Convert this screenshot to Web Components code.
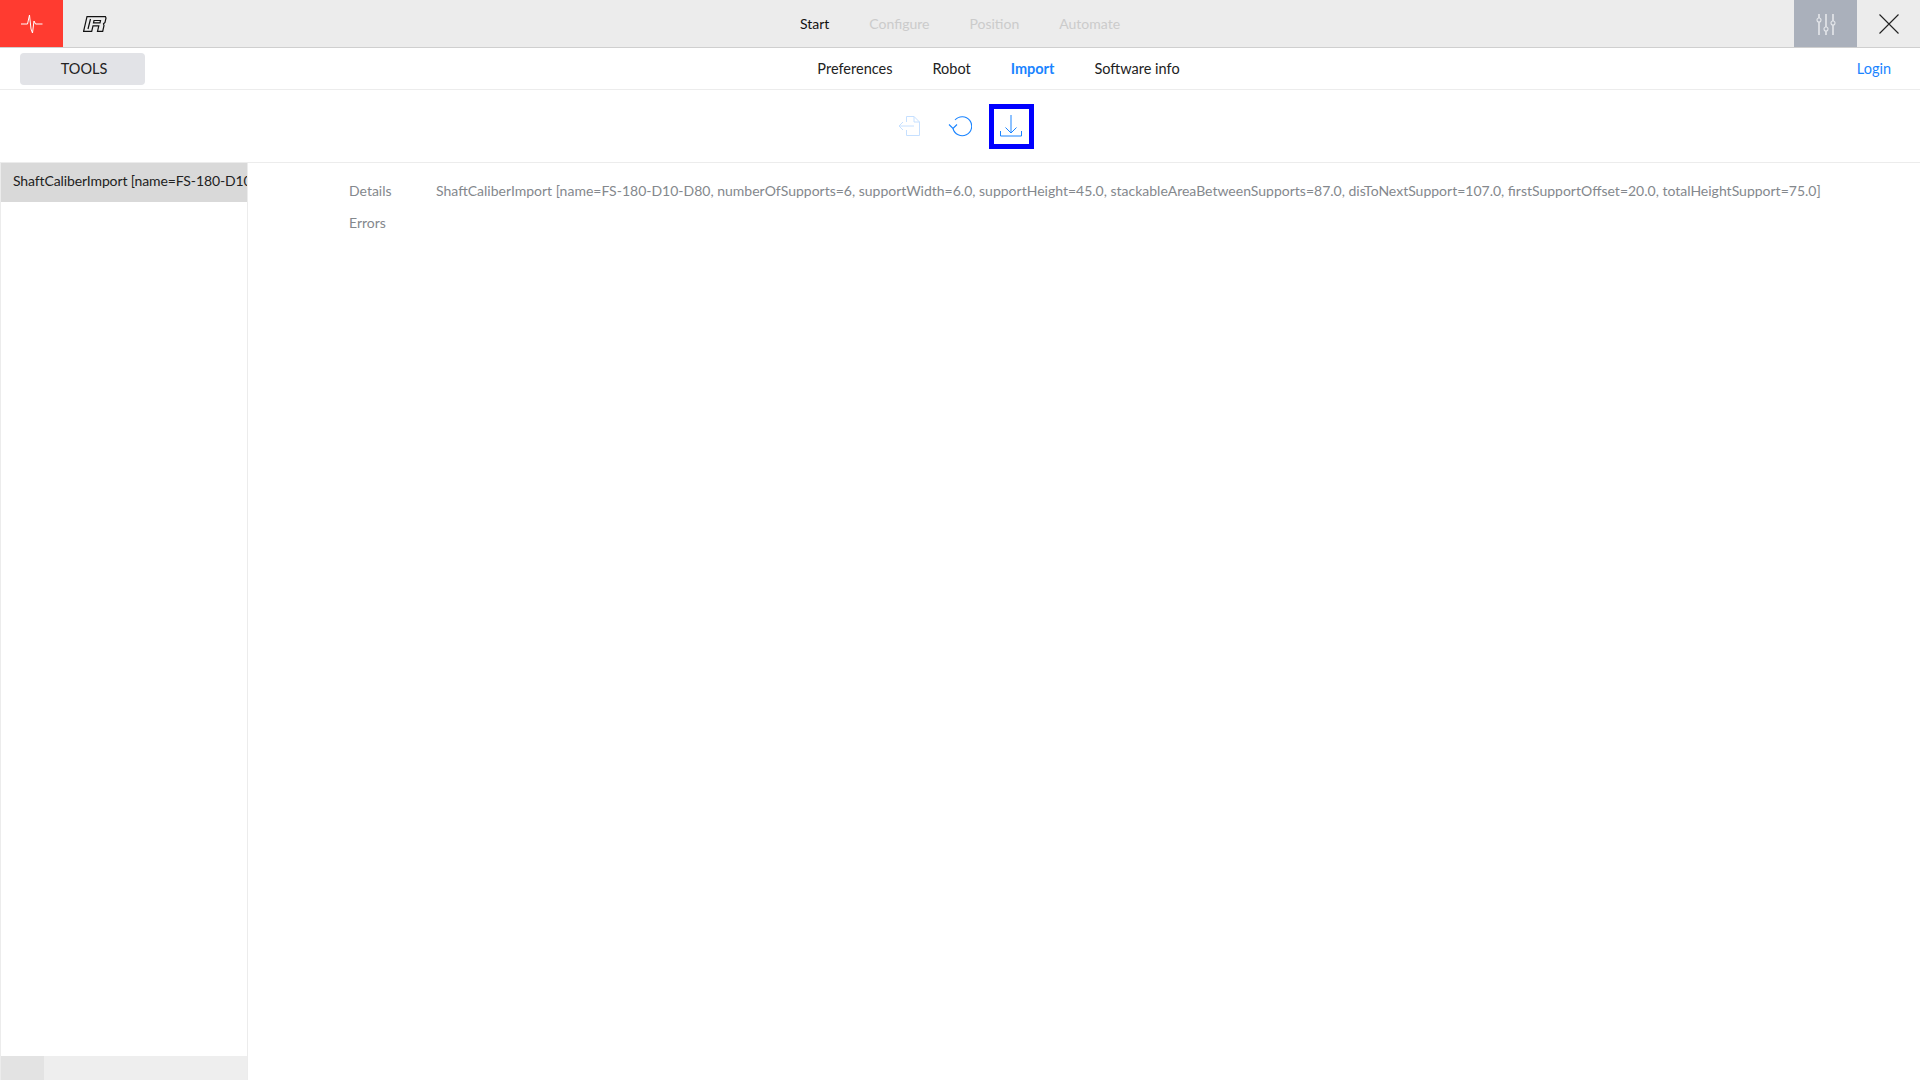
<!DOCTYPE html>
<html>
<head>
<meta charset="utf-8">
<title>Import</title>
<style>
    html, body { margin: 0; height: 100%; background: #fff; overflow: hidden; }
    body { font-family: Lato, "Open Sans", sans-serif; font-size: 14px; }
</style>
</head>
<body>
<app-shell></app-shell>

<script>
// Barra superior: logo, pasos y botones de la derecha
class TopBar extends HTMLElement {
    constructor () {
        super();
        this.attachShadow({ mode: 'open' });
        this.shadowRoot.innerHTML = /* html */ `
            <style>
                :host { display: grid; grid-template-columns: 1fr auto 1fr; height: 48px; box-sizing: border-box;
                    background: #ececec; border-bottom: 1px solid #cfcfcf; }
                .left, .right { display: flex; }
                .right { justify-content: flex-end; }
                .pulse { width: 63px; background: #ff3b30; display: flex; align-items: center; justify-content: center; }
                .logo { width: 63px; display: flex; align-items: center; justify-content: center; }
                .steps { display: flex; align-items: center; gap: 40px; font-size: 14px; color: #cbcbcb; padding-bottom: 1px; }
                .steps .on { color: #111; }
                .tune { width: 63px; background: #aab0bb; display: flex; align-items: center; justify-content: center; }
                .close { width: 63px; display: flex; align-items: center; justify-content: center; }
            </style>
            <div class="left">
                <div class="pulse">
                    <svg width="22" height="20" viewBox="0 0 22 20" fill="none" stroke="#fff" stroke-width="1">
                        <path d="M0 10H6.500L8.500 1L10 15L11.500 19L13 7L14.500 10H21.500"/>
                    </svg>
                </div>
                <div class="logo">
                    <svg width="24" height="16" viewBox="0 0 24 16" fill="none" stroke="#111" stroke-width="1.200">
                        <path d="M4 .6H22.400L23 2L22 6.500L20.500 7.800L21 9.500L19.700 15.400H14.500L15.800 9.800H10L8.700 15.400H.6Z"/>
                        <path d="M7.500 3L5 13M11 4.500H17.500L17 6.800H10.500Z"/>
                    </svg>
                </div>
            </div>
            <div class="steps">
                <span class="on">Start</span><span>Configure</span><span>Position</span><span>Automate</span>
            </div>
            <div class="right">
                <div class="tune">
                    <svg width="20" height="22" viewBox="0 0 20 22" fill="none" stroke="#fff" stroke-width="1.100">
                        <path d="M3 1V5M3 9V22M10 1V14M10 18V22M17 1V8M17 12V22"/>
                        <circle cx="3" cy="7" r="2" stroke="#e4e6ea"/>
                        <circle cx="10" cy="16" r="2" stroke="#e4e6ea"/>
                        <circle cx="17" cy="10" r="2" stroke="#e4e6ea"/>
                    </svg>
                </div>
                <div class="close">
                    <svg width="20" height="20" viewBox="0 0 20 20" fill="none" stroke="#222" stroke-width="1.100">
                        <path d="M.5 .5L19.500 19.500M19.500 .5L.5 19.500"/>
                    </svg>
                </div>
            </div>
        `;
    }
}

// Segunda barra: boton TOOLS, pestañas y Login
class SubNav extends HTMLElement {
    constructor () {
        super();
        this.attachShadow({ mode: 'open' });
        this.shadowRoot.innerHTML = /* html */ `
            <style>
                :host { display: grid; grid-template-columns: 1fr auto 1fr; align-items: center; height: 42px;
                    box-sizing: border-box; border-bottom: 1px solid #ececec; padding: 0 29px 0 20px; }
                .tools { width: 125px; height: 32px; border-radius: 4px; background: #e2e3e7; color: #222;
                    display: flex; align-items: center; justify-content: center; font-size: 14.500px; box-sizing: border-box;
                    padding: 0 0 1px 3px; }
                .tabs { display: flex; gap: 40px; font-size: 14.500px; color: #222; margin-left: 86px; padding-bottom: 1px; }
                .on { color: #1a84ff; font-weight: 700; }
                .login { justify-self: end; color: #1a84ff; font-size: 14.500px; padding-bottom: 1px; }
            </style>
            <div class="tools">TOOLS</div>
            <div class="tabs">
                <span>Preferences</span><span>Robot</span><span class="on">Import</span><span>Software info</span>
            </div>
            <div class="login">Login</div>
        `;
    }
}

// Iconos de accion; el de descarga lleva el foco azul
class ActionBar extends HTMLElement {
    constructor () {
        super();
        this.attachShadow({ mode: 'open' });
        this.shadowRoot.innerHTML = /* html */ `
            <style>
                :host { display: flex; justify-content: center; align-items: center; gap: 6px; height: 73px;
                    box-sizing: border-box; border-bottom: 1px solid #ececec; }
                .btn { width: 45px; height: 45px; box-sizing: border-box; display: flex; align-items: center; justify-content: center; }
                .focus { border: 5px solid #0000ff; }
            </style>
            <div class="btn">
                <svg width="22" height="20" viewBox="0 0 22 20" fill="none" stroke="#c6e0ff" stroke-width="1">
                    <path d="M8.500 6V.5H16L21.500 6V19.500H8.500V14"/>
                    <path d="M16 .5V6H21.500"/>
                    <path d="M1 10H16M5 6L1 10L5 14"/>
                </svg>
            </div>
            <div class="btn">
                <svg width="24" height="21" viewBox="0 0 24 21" fill="none" stroke="#1a84ff" stroke-width="1.100">
                    <path d="M7 4A9.500 9.500 0 1 1 5 12.500"/>
                    <path d="M1 8.500L5 12.500L9 8.500"/>
                </svg>
            </div>
            <div class="btn focus">
                <svg width="22" height="22" viewBox="0 0 22 22" fill="none" stroke="#1a84ff" stroke-width="1">
                    <path d="M11 0V18M5.500 12.500L11 18L16.500 12.500"/>
                    <path d="M.5 16V21H21.500V16"/>
                </svg>
            </div>
        `;
    }
}

// Lista lateral con su barra de scroll horizontal
class SideList extends HTMLElement {
    constructor () {
        super();
        this.attachShadow({ mode: 'open' });
        this.shadowRoot.innerHTML = /* html */ `
            <style>
                :host { display: flex; flex-direction: column; width: 246px; flex: none; box-sizing: content-box;
                    border-left: 1px solid #ececec; border-right: 1px solid #ececec; }
                .items { flex: 1; overflow: hidden; }
                .scroll { height: 24px; background: #eeeeee; }
                .thumb { width: 43px; height: 100%; background: #e3e3e3; }
            </style>
            <div class="items"><slot></slot></div>
            <div class="scroll"><div class="thumb"></div></div>
        `;
    }
}

class SideItem extends HTMLElement {
    constructor () {
        super();
        this.attachShadow({ mode: 'open' });
        this.shadowRoot.innerHTML = /* html */ `
            <style>
                :host { display: block; height: 39px; background: #d9d9d9; color: #222; overflow: hidden;
                    white-space: nowrap; box-sizing: border-box; padding: 8px 0 0 12px; font-size: 14px; line-height: 19px;
                    letter-spacing: -0.12px; }
            </style>
            <slot></slot>
        `;
    }
}

// Fila etiqueta / valor del panel de detalles
class DetailRow extends HTMLElement {
    constructor () {
        super();
        this.attachShadow({ mode: 'open' });
        this.shadowRoot.innerHTML = /* html */ `
            <style>
                :host { display: grid; grid-template-columns: 87px 1fr; height: 32px; align-items: center;
                    color: #84888d; font-size: 14px; white-space: nowrap; }
            </style>
            <div><slot name="label"></slot></div>
            <div><slot></slot></div>
        `;
    }
}

class AppShell extends HTMLElement {
    constructor () {
        super();
        this.attachShadow({ mode: 'open' });
        this.shadowRoot.innerHTML = /* html */ `
            <style>
                :host { display: flex; flex-direction: column; height: 100vh; }
                .body { flex: 1; display: flex; min-height: 0; }
                .details { flex: 1; padding: 11px 0 0 101px; }
            </style>
            <top-bar></top-bar>
            <sub-nav></sub-nav>
            <action-bar></action-bar>
            <div class="body">
                <side-list><side-item>ShaftCaliberImport [name=FS-180-D10</side-item></side-list>
                <div class="details">
                    <detail-row><span slot="label">Details</span>ShaftCaliberImport [name=FS-180-D10-D80, numberOfSupports=6, supportWidth=6.0, supportHeight=45.0, stackableAreaBetweenSupports=87.0, disToNextSupport=107.0, firstSupportOffset=20.0, totalHeightSupport=75.0]</detail-row>
                    <detail-row><span slot="label">Errors</span></detail-row>
                </div>
            </div>
        `;
    }
}

customElements.define('top-bar', TopBar);
customElements.define('sub-nav', SubNav);
customElements.define('action-bar', ActionBar);
customElements.define('side-list', SideList);
customElements.define('side-item', SideItem);
customElements.define('detail-row', DetailRow);
customElements.define('app-shell', AppShell);
</script>
</body>
</html>
